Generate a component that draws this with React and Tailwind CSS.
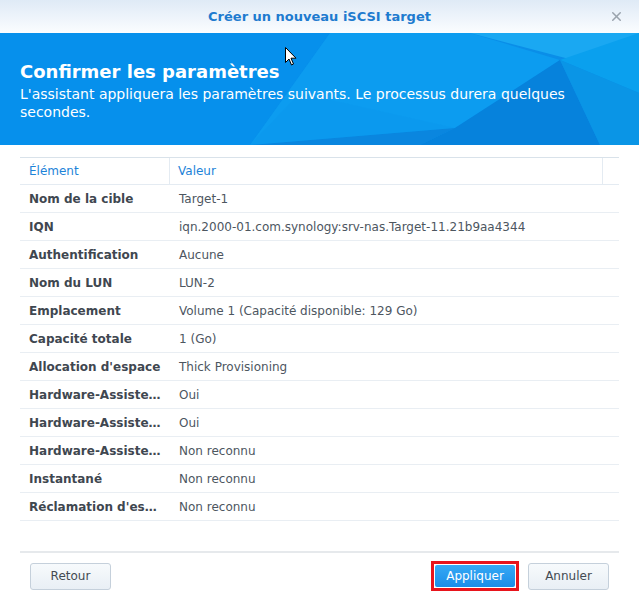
import { X } from 'lucide-react';

const rows = [
  ['Nom de la cible', 'Target-1'],
  ['IQN', 'iqn.2000-01.com.synology:srv-nas.Target-11.21b9aa4344'],
  ['Authentification', 'Aucune'],
  ['Nom du LUN', 'LUN-2'],
  ['Emplacement', 'Volume 1 (Capacité disponible: 129 Go)'],
  ['Capacité totale', '1 (Go)'],
  ["Allocation d'espace", 'Thick Provisioning'],
  ['Hardware-Assiste…', 'Oui'],
  ['Hardware-Assiste…', 'Oui'],
  ['Hardware-Assiste…', 'Non reconnu'],
  ['Instantané', 'Non reconnu'],
  ["Réclamation d'es…", 'Non reconnu'],
];

const Banner = () => (
  <svg className="absolute inset-0 w-full h-full" viewBox="0 0 639 112" preserveAspectRatio="none">
    <rect width="639" height="112" fill="#0a8ee8" />
    <polygon points="0,0 330,0 250,112 0,112" fill="#0690ec" />
    <polygon points="330,0 470,0 560,27 455,95 250,112" fill="#0c9cf0" />
    <polygon points="470,0 639,0 639,5 573,27" fill="#1aa8f2" />
    <polygon points="560,27 639,0 639,60" fill="#0aa0ee" />
    <polygon points="455,95 560,27 600,112 420,112" fill="#0682dc" />
    <polygon points="560,27 639,60 639,112 600,112" fill="#0a95e6" />
    <polygon points="250,112 455,95 420,112" fill="#0a86df" />
    <polygon points="300,60 455,95 250,112" fill="#0c98ec" opacity="0.6" />
  </svg>
);

export default function App() {
  return (
    <div
      className="w-[639px] h-[597px] bg-white flex flex-col relative overflow-hidden"
      style={{ fontFamily: '"DejaVu Sans", Verdana, sans-serif' }}
    >
      {/* title bar */}
      <div className="h-[33px] shrink-0 bg-gradient-to-b from-[#dfeaf6] to-[#fbfdff] flex items-center justify-center relative">
        <span className="text-[13px] font-bold text-[#1e7bcf]">Créer un nouveau iSCSI target</span>
        <X className="absolute right-[15px] top-[9px] w-[15px] h-[15px] text-[#9aa3ad]" strokeWidth={2.4} />
      </div>

      {/* banner */}
      <div className="h-[112px] shrink-0 relative text-white">
        <Banner />
        <div className="relative px-[20px] pt-[27px]">
          <div className="text-[18px] font-bold leading-[24px]">Confirmer les paramètres</div>
          <div className="text-[14px] leading-[18px] mt-[1px] pr-[20px]">
            L'assistant appliquera les paramètres suivants. Le processus durera quelques secondes.
          </div>
        </div>
        <svg className="absolute left-[285px] top-[14px]" width="12" height="19" viewBox="0 0 12 19">
          <path d="M0.5 0.5 L0.5 15.5 L4 12 L6.5 18 L8.5 17 L6 11.2 L11 11.2 Z" fill="#fff" stroke="#000" strokeWidth="1" />
        </svg>
      </div>

      {/* table */}
      <div className="flex-1 px-[20px] pt-[12px]">
        <div className="border-t border-[#d9e2ea]">
          <div className="flex h-[27px] items-center border-b border-[#e4ebf2] text-[12px] text-[#1d83d8]">
            <div className="w-[150px] pl-[9px] h-full flex items-center border-r border-[#e4ebf2]">Élément</div>
            <div className="w-[433px] pl-[8px] h-full flex items-center border-r border-[#e4ebf2]">Valeur</div>
          </div>
          {rows.map((r, i) => (
            <div key={i} className="flex h-[28px] items-center border-b border-[#e9eef3] text-[12px]">
              <div className="w-[150px] pl-[9px] font-bold text-[#3f4750]">{r[0]}</div>
              <div className="pl-[9px] text-[#4d565f]">{r[1]}</div>
            </div>
          ))}
        </div>
      </div>

      {/* footer */}
      <div className="h-[46px] shrink-0 mx-[20px] border-t-2 border-[#e6e9ec] flex items-center pt-[2px] text-[12px]">
        <button className="ml-[10px] w-[81px] h-[27px] rounded-[3px] border border-[#c5d0db] bg-gradient-to-b from-[#f7fafc] to-[#e9eff5] text-[#434a52]">
          Retour
        </button>
        <div className="ml-auto border-[3px] border-[#e8141c] p-[1px]">
          <div className="w-[80px] h-[22px] bg-gradient-to-b from-[#35a9f5] to-[#1a8de8] text-white flex items-center justify-center rounded-[2px]">
            Appliquer
          </div>
        </div>
        <button className="ml-[9px] mr-[10px] w-[81px] h-[27px] rounded-[3px] border border-[#c5d0db] bg-gradient-to-b from-[#f7fafc] to-[#e9eff5] text-[#434a52]">
          Annuler
        </button>
      </div>
    </div>
  );
}
